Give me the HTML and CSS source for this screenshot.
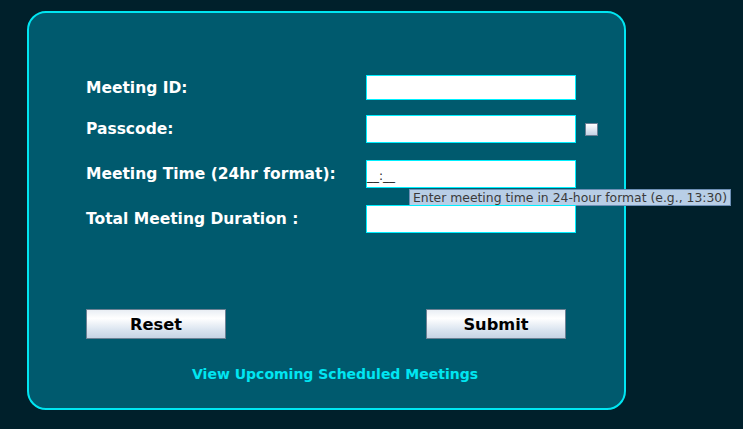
FILE: index.html
```html
<!DOCTYPE html>
<html>
<head>
<meta charset="utf-8">
<link rel="stylesheet" href="styles.css">
</head>
<body>
<div class="card">
  <form class="form">
    <div class="row r1">
      <label class="lbl">Meeting ID:</label>
      <input class="field f1" type="text">
    </div>
    <div class="row r2">
      <label class="lbl">Passcode:</label>
      <input class="field" type="password">
      <span class="chk"></span>
    </div>
    <div class="row r3">
      <label class="lbl">Meeting Time (24hr format):</label>
      <div class="field timef"><span class="mask">__:__</span></div>
      <div class="tip">Enter meeting time in 24-hour format (e.g., 13:30)</div>
    </div>
    <div class="row r4">
      <label class="lbl">Total Meeting Duration :</label>
      <input class="field" type="text">
    </div>
    <div class="buttons">
      <button type="button" class="btn">Reset</button>
      <button type="button" class="btn">Submit</button>
    </div>
  </form>
  <a class="link" href="#">View Upcoming Scheduled Meetings</a>
</div>
</body>
</html>
```

FILE: styles.css
```css
html, body {
  margin: 0;
  padding: 0;
  background: #00202b;
  width: 743px;
  height: 429px;
  overflow: hidden;
  font-family: "DejaVu Sans", sans-serif;
}
.card {
  box-sizing: border-box;
  margin: 11px 0 0 27px;
  width: 599px;
  height: 399px;
  background: #005a6e;
  border: 2px solid #00e6f2;
  border-radius: 19px;
  padding: 62px 0 0 57px;
  display: flex;
  flex-direction: column;
}
.form {
  display: flex;
  flex-direction: column;
}
.row {
  position: relative;
  display: flex;
  align-items: center;
}
.r2 { margin-top: 15px; }
.r3, .r4 { margin-top: 17px; }
.lbl {
  width: 280px;
  color: #ffffff;
  font-weight: bold;
  font-size: 15.5px;
}
.field {
  box-sizing: border-box;
  width: 210px;
  height: 28px;
  margin: 0;
  border: 1px solid #00f0ff;
  background: #ffffff;
  padding: 0;
  outline: none;
}
.f1 { height: 25px; }
.timef {
  display: flex;
  align-items: center;
  padding-top: 3px;
}
.mask {
  font-size: 12px;
  color: #222;
}
.chk {
  box-sizing: border-box;
  width: 13px;
  height: 13px;
  margin-left: 9px;
  border: 1px solid #6a7f95;
  background: linear-gradient(#ffffff, #c3d3e6);
}
.tip {
  position: absolute;
  left: 323px;
  top: 29px;
  box-sizing: border-box;
  height: 17px;
  padding: 0 3px 0 3px;
  background: #b8cee6;
  border: 1px solid #6d8fb5;
  color: #3a3a3a;
  font-size: 12.4px;
  line-height: 15px;
  white-space: nowrap;
}
.buttons {
  display: flex;
  justify-content: space-between;
  width: 480px;
  margin-top: 76px;
}
.btn {
  box-sizing: border-box;
  width: 140px;
  height: 30px;
  border: 1px solid #6b8194;
  background: linear-gradient(#e9eef4 0%, #ffffff 30%, #dbe5f0 70%, #c6d4e4 100%);
  font-family: "DejaVu Sans", sans-serif;
  font-weight: bold;
  font-size: 16.25px;
  color: #000;
  padding: 0;
}
.link {
  margin: 27px 0 0 106px;
  color: #00e6f2;
  font-weight: bold;
  font-size: 14px;
  text-decoration: none;
}
```
